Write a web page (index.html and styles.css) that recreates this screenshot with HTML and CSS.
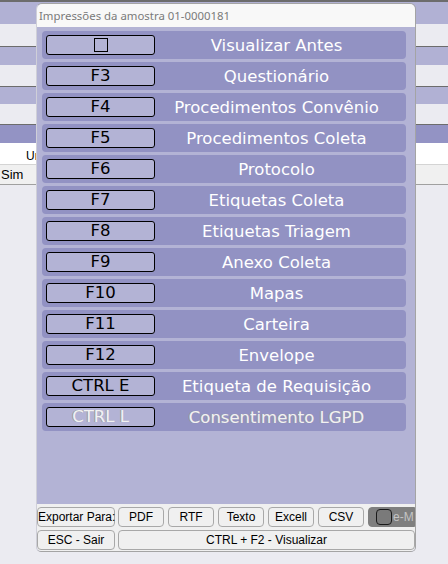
FILE: index.html
```html
<!DOCTYPE html>
<html>
<head>
<meta charset="utf-8">
<link rel="stylesheet" href="styles.css">
</head>
<body>
<div class="bg">
  <div class="ln dark"></div>
  <div class="band lav h22"></div>
  <div class="band light h22"></div>
  <div class="ln dark"></div>
  <div class="band lav h18"></div>
  <div class="band light h21"></div>
  <div class="ln dark"></div>
  <div class="band lav h17"></div>
  <div class="band light h20"></div>
  <div class="ln dark"></div>
  <div class="band lav2 h18"></div>
  <div class="band white h21 hdr">Ur</div>
  <div class="ln soft"></div>
  <div class="band grey h19 cell">Sim</div>
  <div class="ln mid"></div>
</div>

<div class="win">
  <div class="title">Impressões da amostra 01-0000181</div>
  <div class="panel">
    <div class="row"><div class="key"><span class="box"></span></div><div class="lbl">Visualizar Antes</div></div>
    <div class="row"><div class="key">F3</div><div class="lbl">Questionário</div></div>
    <div class="row"><div class="key">F4</div><div class="lbl">Procedimentos Convênio</div></div>
    <div class="row"><div class="key">F5</div><div class="lbl">Procedimentos Coleta</div></div>
    <div class="row"><div class="key">F6</div><div class="lbl">Protocolo</div></div>
    <div class="row"><div class="key">F7</div><div class="lbl">Etiquetas Coleta</div></div>
    <div class="row"><div class="key">F8</div><div class="lbl">Etiquetas Triagem</div></div>
    <div class="row"><div class="key">F9</div><div class="lbl">Anexo Coleta</div></div>
    <div class="row"><div class="key">F10</div><div class="lbl">Mapas</div></div>
    <div class="row"><div class="key">F11</div><div class="lbl">Carteira</div></div>
    <div class="row"><div class="key">F12</div><div class="lbl">Envelope</div></div>
    <div class="row"><div class="key">CTRL E</div><div class="lbl">Etiqueta de Requisição</div></div>
    <div class="row off"><div class="key">CTRL L</div><div class="lbl">Consentimento LGPD</div></div>
  </div>
  <div class="foot">
    <div class="brow">
      <div class="btn wide">Exportar Para:</div>
      <div class="btn">PDF</div>
      <div class="btn">RTF</div>
      <div class="btn">Texto</div>
      <div class="btn">Excell</div>
      <div class="btn">CSV</div>
      <div class="btn dark"><span class="chk"></span><span class="em">e-M</span></div>
    </div>
    <div class="brow">
      <div class="btn wide">ESC - Sair</div>
      <div class="btn grow">CTRL + F2 - Visualizar</div>
    </div>
  </div>
</div>
</body>
</html>
```

FILE: styles.css
```css
html, body {
  margin: 0;
  padding: 0;
}
body {
  width: 448px;
  height: 564px;
  background: #ebebf1;
  position: relative;
  overflow: hidden;
  font-family: "DejaVu Sans", sans-serif;
}
.bg {
  display: flex;
  flex-direction: column;
}
.ln { height: 1px; }
.ln.dark { background: #6c6c6c; }
.ln.soft { background: #d4d4d4; }
.ln.mid { background: #a0a0a0; }
.bg > .ln.dark:first-child { height: 2px; }
.h17 { height: 17px; }
.h18 { height: 18px; }
.h19 { height: 19px; }
.h20 { height: 20px; }
.h21 { height: 21px; }
.h22 { height: 22px; }
.lav { background: #b1b1d4; }
.lav2 { background: #9393c4; }
.light { background: #ebebf1; }
.white { background: #ffffff; }
.grey { background: #f0f0f0; }
.hdr {
  font-family: "Liberation Sans", sans-serif;
  font-size: 12px;
  padding-left: 26px;
  line-height: 26px;
  color: #000;
}
.cell {
  font-family: "Liberation Sans", sans-serif;
  font-size: 13px;
  padding-left: 1px;
  line-height: 19px;
  color: #000;
}

.win {
  position: absolute;
  left: 36px;
  top: 3px;
  width: 380px;
  height: 549px;
  box-sizing: border-box;
  border: 1px solid #a4a4a4;
  border-left-color: #cfcfd8;
  border-radius: 6px 6px 5px 5px;
  overflow: hidden;
  display: flex;
  flex-direction: column;
  background: #b3b3d5;
}
.title {
  height: 23px;
  background: #f8f8f8;
  color: #7a7a7a;
  font-family: "Noto Sans", sans-serif;
  font-size: 11.4px;
  line-height: 23px;
  padding-left: 2px;
  white-space: nowrap;
}
.panel {
  flex: 1;
  background: #b3b3d5;
  padding: 4px 9px 0 5px;
}
.row {
  height: 28px;
  margin-bottom: 3px;
  background: #9292c3;
  border-radius: 4px;
  display: flex;
  align-items: center;
  padding-left: 4px;
}
.key {
  width: 109px;
  height: 20px;
  box-sizing: border-box;
  border: 1px solid #000;
  border-radius: 3px;
  background: #b3b3d5;
  color: #000;
  font-size: 16.5px;
  line-height: 18px;
  text-align: center;
  display: flex;
  align-items: center;
  justify-content: center;
}
.box {
  width: 14px;
  height: 14px;
  box-sizing: border-box;
  border: 1px solid #000;
}
.lbl {
  flex: 1;
  text-align: center;
  color: #ffffff;
  font-size: 16.5px;
  padding-right: 8px;
  white-space: nowrap;
}
.off .key, .off .lbl {
  color: #f2f2f2;
  text-shadow: -1px 0 0 #9a9a9a;
}
.foot {
  height: 47px;
  background: #f0f0f0;
  padding-top: 3px;
  box-sizing: border-box;
  display: flex;
  flex-direction: column;
  gap: 3px;
}
.brow {
  display: flex;
  gap: 4px;
  height: 20px;
  white-space: nowrap;
}
.btn {
  width: 46px;
  flex: none;
  height: 20px;
  box-sizing: border-box;
  border: 1px solid #a8a8a8;
  border-radius: 4px;
  background: #f0f0f0;
  font-family: "Liberation Sans", sans-serif;
  font-size: 12px;
  line-height: 18px;
  text-align: center;
  color: #000;
}
.btn.wide {
  width: 78px;
  margin-right: -1px;
}
.btn.grow {
  flex: 1;
  text-align: center;
}
.btn.dark {
  width: 47px;
  background: #7f7f7f;
  border-color: #7f7f7f;
  border-radius: 4px 0 0 4px;
  color: #c4c4c4;
  display: flex;
  align-items: center;
  text-align: left;
  padding-left: 7px;
  gap: 1px;
  overflow: hidden;
}
.em {
  font-size: 12px;
}
.chk {
  width: 16px;
  height: 16px;
  box-sizing: border-box;
  border: 1px solid #1a1a1a;
  border-radius: 4px;
  background: #7a7a7a;
  flex: none;
}
```
